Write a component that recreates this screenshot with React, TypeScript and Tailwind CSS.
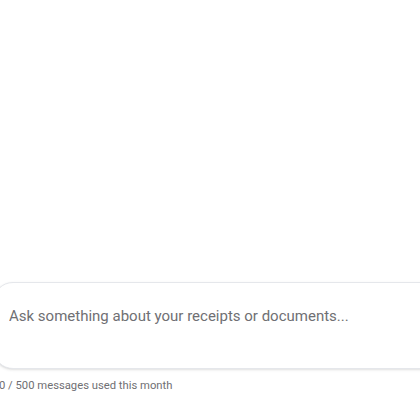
export default function App() {
  return (
    <div
      className="flex h-[420px] w-[420px] flex-col justify-end overflow-hidden bg-white pb-[25px]"
      style={{ fontFamily: 'Roboto, "Noto Sans", sans-serif' }}
    >
      <div className="-ml-[7px] w-[460px]">
        <div className="flex h-[87px] items-start rounded-[20px] border border-gray-200 bg-white px-[15px] pt-[22px] shadow-sm">
          <textarea
            rows={1}
            placeholder="Ask something about your receipts or documents..."
            className="w-full resize-none bg-transparent text-[15px] leading-[22px] text-gray-700 placeholder:text-[#6f6f73] outline-none"
          />
        </div>
        <p className="mt-[9px] pl-[6px] text-[11.25px] text-[#6f6f73]">0 / 500 messages used this month</p>
      </div>
    </div>
  );
}
